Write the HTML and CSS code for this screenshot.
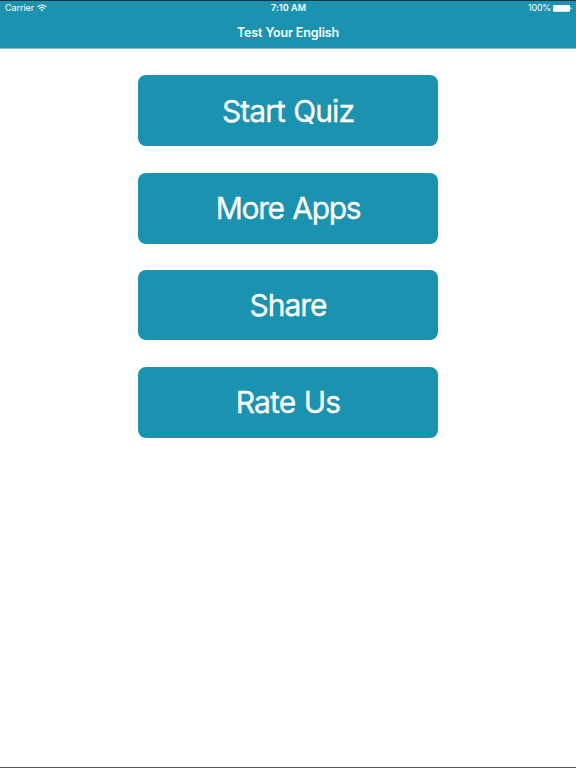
FILE: index.html
```html
<!DOCTYPE html>
<html lang="en">
<head>
<meta charset="utf-8">
<title>Test Your English</title>
<link rel="stylesheet" href="styles.css">
</head>
<body>
<div class="screen">
  <header class="header">
    <div class="status">
      <div class="status-left"><span class="carrier">Carrier</span>
        <svg class="wifi" width="10" height="8" viewBox="0 0 10 8" fill="none" stroke="#fff" stroke-width="1.2"><path d="M.6 2.9Q5-.9 9.4 2.9M2.3 4.6Q5 2.3 7.7 4.6"/><path d="M3.5 5.7Q5 4.6 6.5 5.7L5 7.3Z" fill="#fff" stroke="none"/></svg>
      </div>
      <span class="time">7:10 AM</span>
      <div class="status-right"><span class="percent">100%</span>
        <svg class="battery" width="19" height="7" viewBox="0 0 19 7" fill="#fff"><rect width="17" height="6.8" rx="1.2"/><path d="M17.4 2Q19.6 3.4 17.4 4.8Z"/></svg>
      </div>
    </div>
    <h1 class="title">Test Your English</h1>
  </header>
  <main class="menu">
    <button class="item">Start Quiz</button>
    <button class="item more">More Apps</button>
    <button class="item short">Share</button>
    <button class="item rate">Rate Us</button>
  </main>
</div>
</body>
</html>
```
FILE: styles.css
```css
* { box-sizing: border-box; }
body { margin: 0; font-family: Inter, "Liberation Sans", sans-serif; background: #fff; }
.screen { height: 768px; border-bottom: 1px solid #555; overflow: hidden; }
.header { height: 49px; background: #1b92b0; color: #fff; border-top: 1px solid #0d3a46; border-bottom: 1px solid #76bdd0; }
.status { height: 14px; padding: 0 4px 0 5px; display: grid; grid-template-columns: 1fr auto 1fr; align-items: center; font-size: 9px; line-height: 14px; }
.status-left, .status-right { display: flex; align-items: center; gap: 3px; }
.status-right { justify-content: flex-end; gap: 2px; }
.carrier { letter-spacing: -.05px; }
.percent { letter-spacing: -.2px; }
.time { font-weight: 600; letter-spacing: .05px; }
.title { margin: 9px 0 0; text-align: center; font-size: 12.5px; line-height: 18px; font-weight: 600; letter-spacing: -.12px; }
.menu { padding-top: 26px; display: flex; flex-direction: column; align-items: center; gap: 26.5px; }
.item { width: 300px; height: 71.2px; padding: 0; border: 0; border-radius: 8px; background: #1b92b0; color: #fff; font: 400 30px/36px Inter, sans-serif; letter-spacing: -.95px; word-spacing: 1px; -webkit-text-stroke: .3px #fff; }
.more { letter-spacing: -1.35px; word-spacing: 1.5px; }
.short { height: 70px; letter-spacing: -1px; }
.rate { letter-spacing: -.9px; }
```
